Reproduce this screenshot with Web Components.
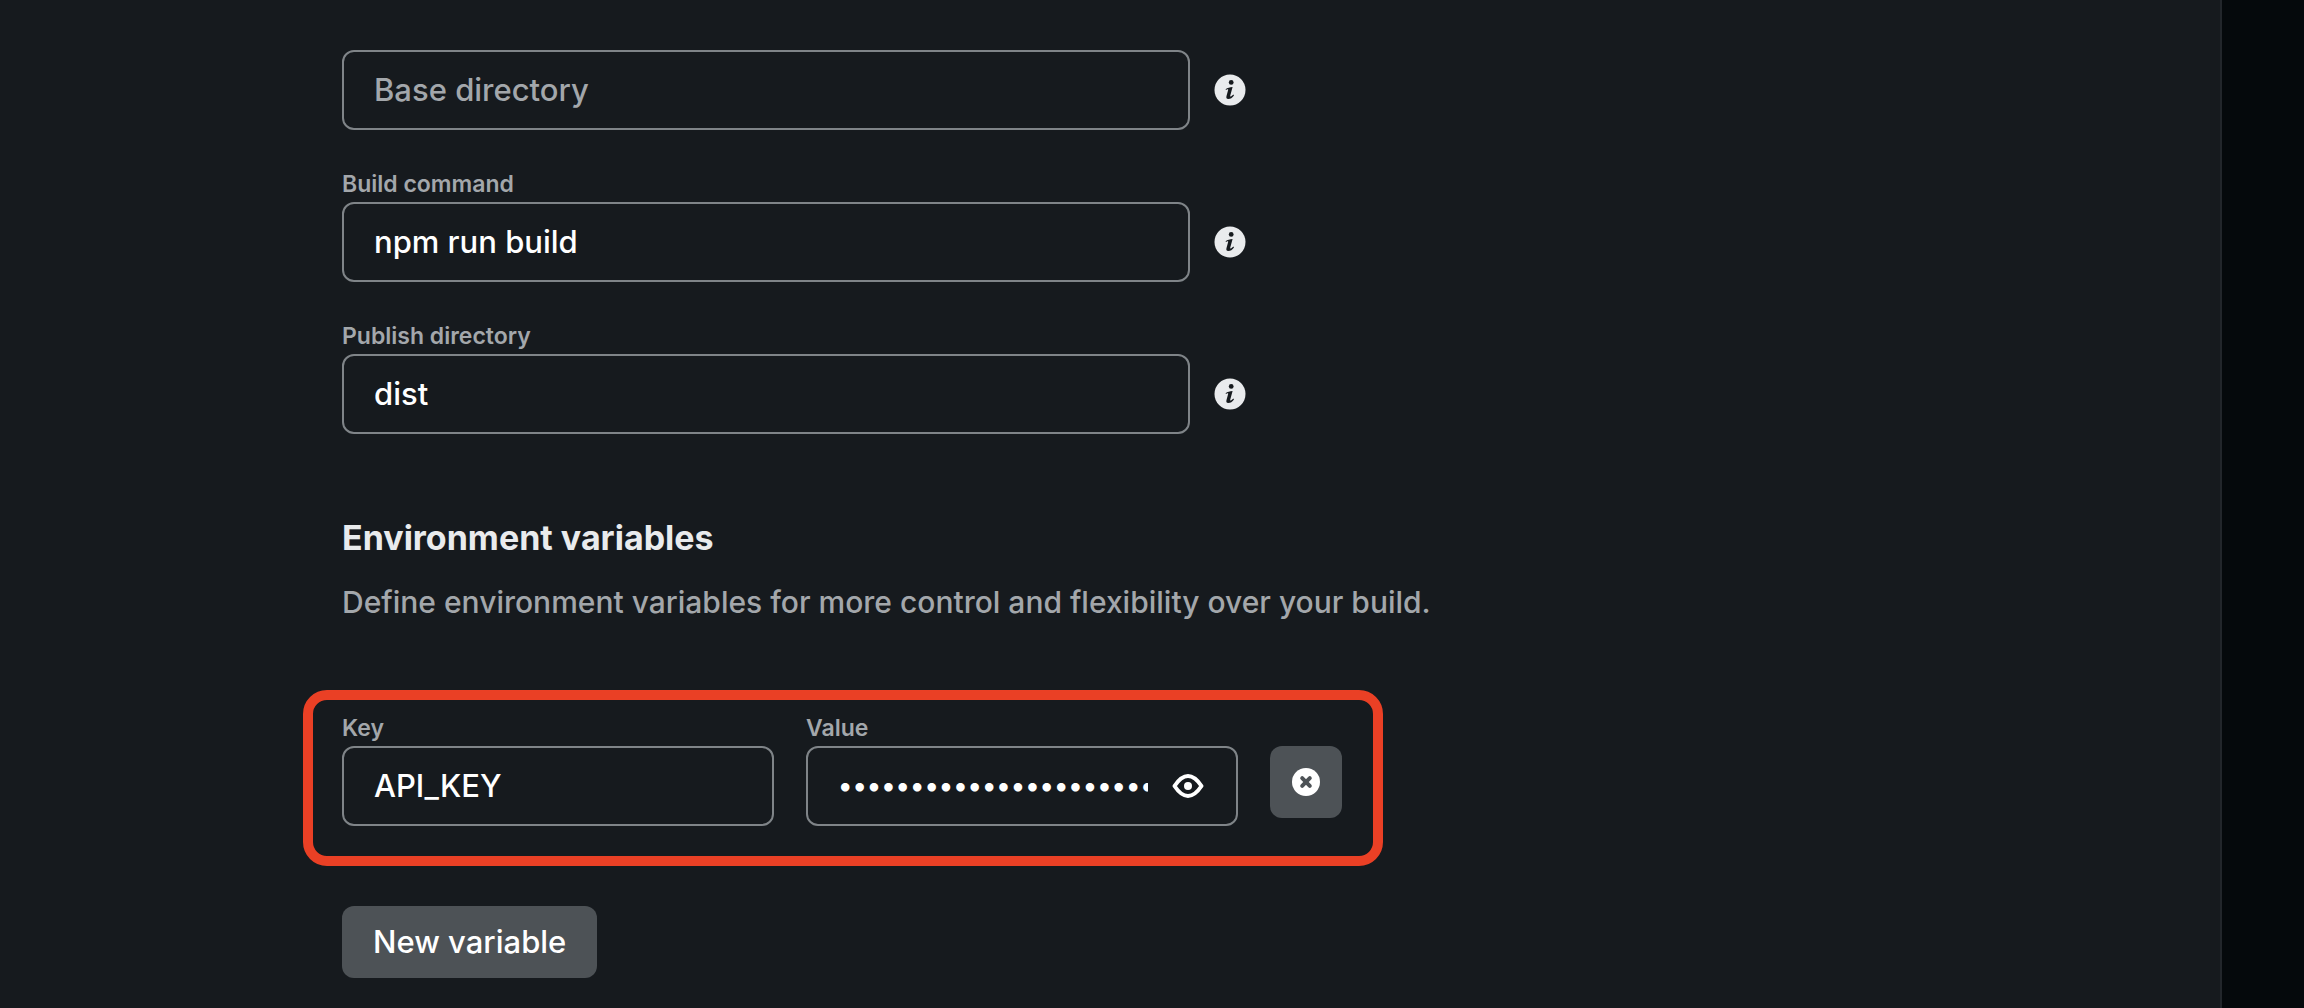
<!DOCTYPE html>
<html lang="en">
<head>
<meta charset="utf-8">
<title>Build settings</title>
<style>
  html { background: #05090c; }
  body {
    margin: 0;
    font-family: Inter, "Liberation Sans", sans-serif;
    color: #e9ebed;
    --panel: #161a1e;
    --muted: #a3a7ab;
    --line: #7f8488;
    --control: #4d5256;
    --accent: #ea4025;
  }
</style>
</head>
<body>
<build-settings></build-settings>

<template id="settings-template">
  <style>
    :host { display: flex; min-height: 100vh; box-sizing: border-box; padding-right: 82px; overflow: hidden; }
    main { flex: 1; box-sizing: border-box; background: var(--panel); border-right: 2px solid #22262b; padding: 50px 342px 30px; }
    .fields { display: flex; flex-direction: column; gap: 40px; }
    h2 { margin: 84px 0 0; font-size: 34px; line-height: 40px; font-weight: 700; }
    p { margin: 22px 0 0; font-size: 30px; line-height: 44px; font-weight: 500; color: var(--muted); }
    env-row { margin: 66px 0 40px -39px; }
  </style>
  <main>
    <div class="fields">
      <text-field placeholder="Base directory" hint></text-field>
      <text-field label="Build command" value="npm run build" hint></text-field>
      <text-field label="Publish directory" value="dist" hint></text-field>
    </div>
    <h2>Environment variables</h2>
    <p>Define environment variables for more control and flexibility over your build.</p>
    <env-row>
      <text-field label="Key" value="API_KEY"></text-field>
      <text-field label="Value" value="0123456789abcdef01234567" secret></text-field>
    </env-row>
    <flat-button>New variable</flat-button>
  </main>
</template>

<template id="field-template">
  <style>
    :host { display: block; }
    label { display: block; font-size: 23px; line-height: 28px; font-weight: 600; color: var(--muted); padding-bottom: 4px; }
    label[hidden] { display: none; }
    .line { display: flex; align-items: center; gap: 24px; }
    .box { display: flex; align-items: center; box-sizing: border-box; width: 100%; max-width: 848px; height: 80px; border: 2px solid var(--line); border-radius: 12px; padding: 0 32px 0 30px; }
    input { flex: 1; min-width: 0; border: 0; padding: 0; outline: 0; background: none; color: #fff; font: inherit; font-size: 31px; line-height: 40px; font-weight: 500; }
    input[type="password"] { font-size: 27px; }
    input::placeholder { color: var(--muted); opacity: 1; }
    button { display: block; flex: none; border: 0; padding: 0; background: none; color: #fff; }
    button[hidden] { display: none; }
    svg { display: block; }
    .eye { margin-left: 24px; }
  </style>
  <label for="input"></label>
  <div class="line">
    <div class="box">
      <input id="input" spellcheck="false" autocomplete="off">
      <button class="eye" type="button" aria-label="Show value">
        <svg width="32" height="32" viewBox="0 0 32 32" fill="none" stroke="currentColor" stroke-width="4" stroke-linejoin="round"><path d="M2.500 16C6.500 10 10.500 6 16 6s9.500 4 13.500 10c-4 6-8 10-13.500 10S6.500 22 2.500 16z"/><circle cx="16" cy="16" r="4" fill="currentColor" stroke="none"/></svg>
      </button>
    </div>
    <button class="info" type="button" aria-label="More information">
      <svg width="32" height="32" viewBox="0 0 32 32"><circle cx="16" cy="16" r="15.500" fill="#e9ebed"/><circle cx="17.200" cy="8.400" r="2.400" fill="#161a1e"/><path d="M11.600 15.200C13.500 13.700 15.800 13 18.600 12.900L16.200 21.800C16 22.700 16.500 22.800 17.300 22.200L19.400 20.600L20 21.400C18.300 23.700 16.400 25 14.300 25C12.500 25 12 23.800 12.500 22L14.200 15.800C14.300 15.200 13.900 15 13.200 15.300L12 16Z" fill="#161a1e"/></svg>
    </button>
  </div>
</template>

<template id="row-template">
  <style>
    :host { display: flex; width: fit-content; box-sizing: border-box; align-items: flex-start; gap: 32px; border: 10px solid var(--accent); border-radius: 24px; padding: 14px 31px 30px 29px; }
    ::slotted(text-field) { width: 432px; }
    icon-button { margin-top: 32px; }
  </style>
  <slot></slot>
  <icon-button></icon-button>
</template>

<template id="icon-button-template">
  <style>
    :host { display: block; }
    button { display: flex; align-items: center; justify-content: center; width: 72px; height: 72px; border: 0; padding: 0; border-radius: 12px; background: var(--control); color: #fff; }
  </style>
  <button type="button" aria-label="Remove variable">
    <svg width="28" height="28" viewBox="0 0 28 28"><circle cx="14" cy="14" r="14" fill="currentColor"/><path d="M10.200 10.200l7.600 7.600M17.800 10.200l-7.600 7.600" stroke="#4d5256" stroke-width="4" stroke-linecap="round"/></svg>
  </button>
</template>

<template id="flat-button-template">
  <style>
    :host { display: block; }
    button { border: 0; border-radius: 12px; background: var(--control); color: #fff; font: inherit; font-size: 31px; line-height: 40px; font-weight: 500; padding: 16px 31px; }
  </style>
  <button type="button"><slot></slot></button>
</template>

<script>
  class TemplateElement extends HTMLElement {
    constructor() {
      super();
      const template = document.getElementById(this.constructor.template);
      this.attachShadow({ mode: "open" }).append(template.content.cloneNode(true));
    }
  }

  class TextField extends TemplateElement {
    static template = "field-template";
    connectedCallback() {
      const find = (selector) => this.shadowRoot.querySelector(selector);
      const label = find("label");
      const input = find("input");
      const secret = this.hasAttribute("secret");
      label.textContent = this.getAttribute("label") || "";
      label.hidden = !this.hasAttribute("label");
      input.type = secret ? "password" : "text";
      input.placeholder = this.getAttribute("placeholder") || "";
      input.value = this.getAttribute("value") || "";
      if (label.hidden) input.setAttribute("aria-label", input.placeholder);
      find(".eye").hidden = !secret;
      find(".info").hidden = !this.hasAttribute("hint");
    }
  }

  class FlatButton extends TemplateElement { static template = "flat-button-template"; }
  class IconButton extends TemplateElement { static template = "icon-button-template"; }
  class EnvRow extends TemplateElement { static template = "row-template"; }
  class BuildSettings extends TemplateElement { static template = "settings-template"; }

  customElements.define("text-field", TextField);
  customElements.define("flat-button", FlatButton);
  customElements.define("icon-button", IconButton);
  customElements.define("env-row", EnvRow);
  customElements.define("build-settings", BuildSettings);
</script>
</body>
</html>
